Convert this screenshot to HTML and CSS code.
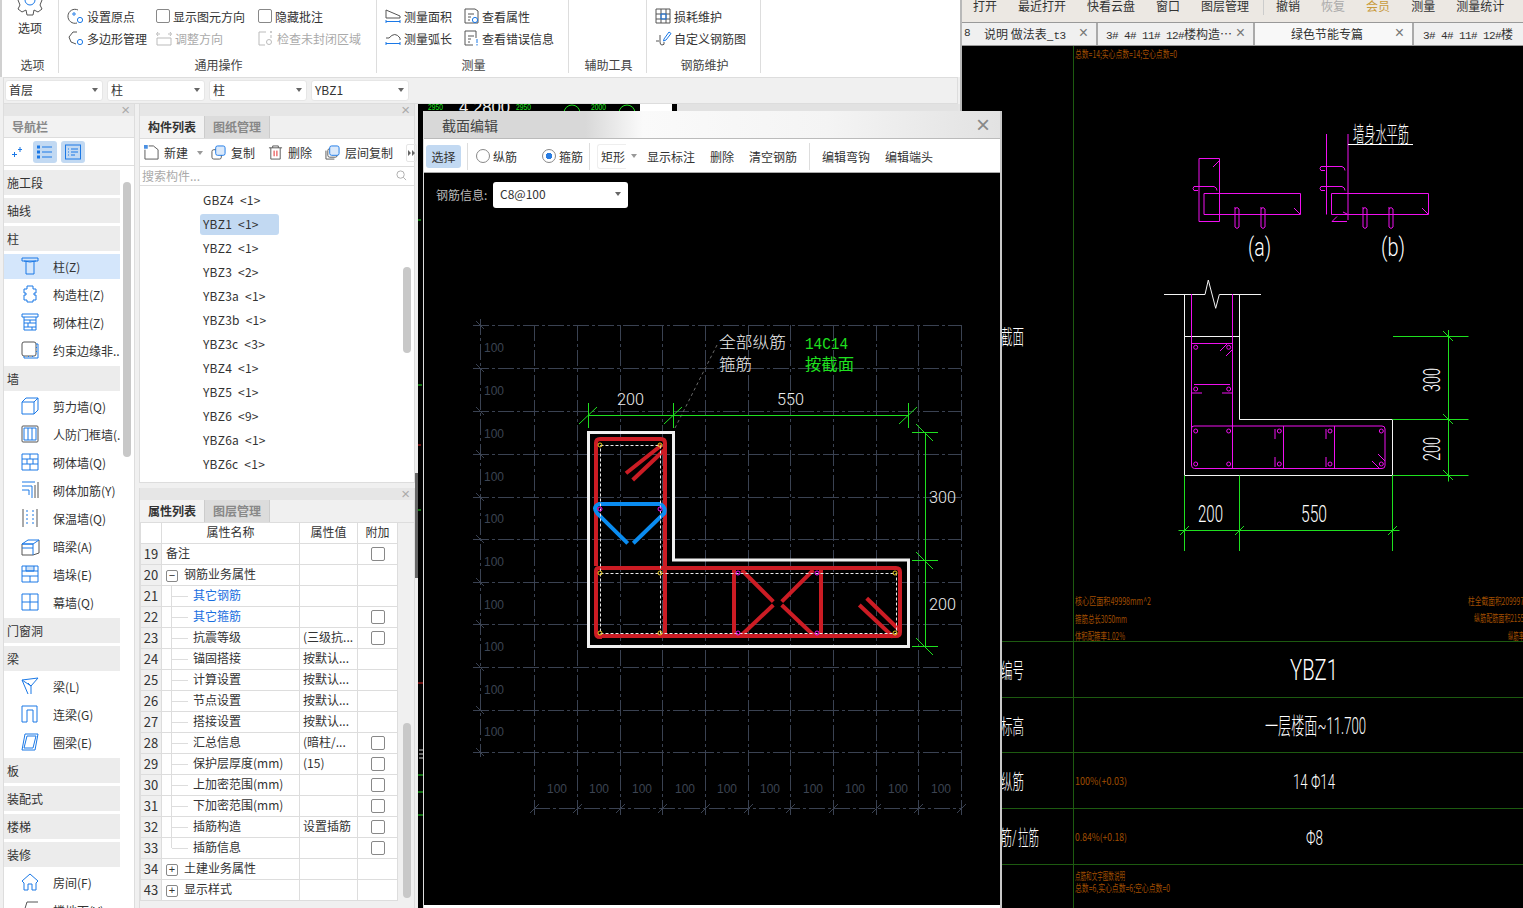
FILE: index.html
```html
<!DOCTYPE html>
<html>
  <head>
    <title>截面编辑</title>
    <meta http-equiv="Content-Type" content="text/html; charset=UTF-8">
    <link rel="stylesheet" href="styles.css">
  </head>

  <body>
    <div class="app">
      <!-- ribbon -->
      <div class="ribbon">
        <div class="group groupOpt">
          <svg class="gear" width="32" height="16" viewBox="0 0 32 16"><path d="M4 0 L6 5 L4 9 L8 12 L12 10 L13 15 H19 L20 10 L24 12 L28 9 L26 5 L28 0" class="gr"/><path d="M11 0 A5 5 0 0 0 21 0" class="bl"/></svg>
          <div class="optName">选项</div>
          <div class="groupName">选项</div>
        </div>
        <div class="group groupGen">
          <div class="rows gridGen">
            <div class="rbItem"><svg class="ic" viewBox="0 0 16 16"><path class="gr" d="M10 2 A7 7 0 1 0 9 15"/><circle class="bl" cx="6" cy="6" r="1.2"/><circle class="bl" cx="12" cy="12" r="2.6"/></svg>设置原点</div>
            <div class="rbItem"><span class="chk"></span>显示图元方向</div>
            <div class="rbItem"><span class="chk"></span>隐藏批注</div>
            <div class="rbItem"><svg class="ic" viewBox="0 0 16 16"><path class="gr" d="M9 2 H5 L1 7 3 12 8 14"/><circle class="bl" cx="12" cy="12" r="2.6"/></svg>多边形管理</div>
            <div class="rbItem off"><svg class="ic" viewBox="0 0 16 16"><path class="lg" d="M1 8 H15 V15 H1 Z M1 4 H4 M2 2 L0.500 4 2 6 M12 4 H15 M14 2 L15.500 4 14 6"/></svg>调整方向</div>
            <div class="rbItem off"><svg class="ic" viewBox="0 0 16 16"><path class="lg" d="M8 2 H1 V15 H7 M13 5 V8"/><circle class="lg" cx="11" cy="12" r="2.500"/><circle cx="13" cy="2" r="1" fill="#bbb"/></svg>检查未封闭区域</div>
          </div>
          <div class="groupName">通用操作</div>
        </div>
        <div class="group groupMeas">
          <div class="rows gridMeas">
            <div class="rbItem"><svg class="ic" viewBox="0 0 16 16"><path class="gr" d="M1 2 L15 8 V10 H1 Z"/><path class="bl" d="M1 12 V15 M15 12 V15 M1 13.500 H15"/></svg>测量面积</div>
            <div class="rbItem"><svg class="ic" viewBox="0 0 16 16"><path class="gr" d="M2 1 H12 L15 3 V15 H2 Z M5 6 H11 M5 9 H8 M5 12 H7"/><circle class="bl" cx="12" cy="12" r="2.600"/></svg>查看属性</div>
            <div class="rbItem"><svg class="ic" viewBox="0 0 16 16"><path class="gr" d="M1 8 H4 Q10 1 15 8 V10"/><path class="bl" d="M1 12 V15 M15 12 V15 M1 13.500 H15"/></svg>测量弧长</div>
            <div class="rbItem"><svg class="ic" viewBox="0 0 16 16"><path class="gr" d="M13 8 V1 H2 V15 H10 M5 6 H11 M5 9 H8 M5 12 H7"/><path class="bl" d="M14 9 V13 M14 14 V15.500"/></svg>查看错误信息</div>
          </div>
          <div class="groupName">测量</div>
        </div>
        <div class="group groupAux">
          <div class="rows"></div>
          <div class="groupName">辅助工具</div>
        </div>
        <div class="group groupRebar">
          <div class="rows gridRebar">
            <div class="rbItem"><svg class="ic" viewBox="0 0 16 16"><path class="gr" d="M1 1 H15 V15 H1 Z M6 1 V15 M11 1 V15 M1 6 H15 M1 11 H15"/><path class="bl" d="M6 6 H11 V11 H6 Z"/></svg>损耗维护</div>
            <div class="rbItem"><svg class="ic" viewBox="0 0 16 16"><path class="gr" d="M5 5 V12 Q5 15 7 15 Q10 15 9 12 M1 11 H4"/><path class="bl" d="M9 9 L14 2 16 3.500 11 10 8.500 11 Z"/></svg>自定义钢筋图</div>
          </div>
          <div class="groupName">钢筋维护</div>
        </div>
      </div>

      <!-- floor / type selectors -->
      <div class="selBar">
        <div class="combo">首层</div>
        <div class="combo">柱</div>
        <div class="combo">柱</div>
        <div class="combo">YBZ1</div>
      </div>

      <div class="work">
        <!-- navigation -->
        <div class="nav">
          <div class="paneHead">×</div>
          <div class="navTitle">导航栏</div>
          <div class="navTools">
            <svg class="navSpark" viewBox="0 0 10 10"><path class="bl" d="M0 7.500 H5 M2.500 5 V10 M6 2.500 H10 M8 0 V5"/></svg>
            <div class="navBtn"><svg class="ic" viewBox="0 0 16 16"><path class="bl" d="M5 3 H15 M5 8 H15 M5 13 H15"/><rect class="bl" x="0.500" y="2" width="2" height="2"/><rect class="bl" x="0.500" y="7" width="2" height="2"/><rect class="bl" x="0.500" y="12" width="2" height="2"/></svg></div>
            <div class="navBtn"><svg class="ic" viewBox="0 0 16 16"><rect class="bl" x="0.500" y="1" width="15" height="14"/><path class="bl" d="M3 5 H4 M6 5 H13 M3 8 H4 M6 8 H13 M3 11 H4 M6 11 H10"/></svg></div>
          </div>
          <div class="navList">
            <div class="navCat">施工段</div>
            <div class="navCat">轴线</div>
            <div class="navCat">柱</div>
            <div class="navItem cur"><svg class="ic" viewBox="0 0 18 18"><path class="bl" d="M1 1 H17 V4 H1 Z M3 4 Q9 6 15 4 M5 5 V17 H13 V5"/></svg>柱(Z)</div>
            <div class="navItem"><svg class="ic" viewBox="0 0 18 18"><path class="bl" d="M6 1 H12 V4 H15 V8 H13 V10 H15 V15 H12 V17 H6 V15 H3 V10 H5 V8 H3 V4 H6 Z"/></svg>构造柱(Z)</div>
            <div class="navItem"><svg class="ic" viewBox="0 0 18 18"><path class="bl" d="M1 1 H17 V4 H1 Z M3 4 V7 H15 V4 M3 7 V17 H15 V7 M3 10 H15 M3 14 H15 M9 7 V10 M7 10 V14 M11 14 V17"/></svg>砌体柱(Z)</div>
            <div class="navItem"><svg class="ic" viewBox="0 0 18 18"><rect class="gr" x="1" y="1" width="14" height="14" rx="2"/><path class="bl" d="M15 3 H17 V17 H3 V15 M16 6 L15 7 M16 10 L15 11 M7 16 L8 15 M11 16 L12 15"/></svg>约束边缘非..</div>
            <div class="navCat">墙</div>
            <div class="navItem"><svg class="ic" viewBox="0 0 18 18"><path class="bl" d="M1 5 H13 V17 H1 Z M1 5 L5 1 H17 V13 L13 17 M13 5 L17 1"/></svg>剪力墙(Q)</div>
            <div class="navItem"><svg class="ic" viewBox="0 0 18 18"><rect class="gr" x="1" y="1" width="16" height="16" rx="1"/><path class="bl" d="M3 3 H15 V15 H3 Z M7 3 V15 M11 3 V15"/></svg>人防门框墙(..</div>
            <div class="navItem"><svg class="ic" viewBox="0 0 18 18"><path class="bl" d="M1 1 H17 V17 H1 Z M1 6 H17 M1 11 H17 M9 1 V6 M6 6 V11 M12 6 V11 M9 11 V17"/></svg>砌体墙(Q)</div>
            <div class="navItem"><svg class="ic" viewBox="0 0 18 18"><path class="gr" d="M17 1 V17 M14 4 V17"/><path class="bl" d="M1 1 H14 M1 5 H11 V17 M1 9 H8 V14"/></svg>砌体加筋(Y)</div>
            <div class="navItem"><svg class="ic" viewBox="0 0 18 18"><path class="gr" d="M2 0 V18 M16 0 V18"/><path class="bl" stroke-dasharray="2 2" d="M6 1 V17 M12 1 V17"/></svg>保温墙(Q)</div>
            <div class="navItem"><svg class="ic" viewBox="0 0 18 18"><path class="gr" d="M1 7 V18 H12 L18 16 V3"/><path class="bl" d="M1 7 L7 3 H18 L12 7 Z M1 7 H12 V18 M1 11 H12"/></svg>暗梁(A)</div>
            <div class="navItem"><svg class="ic" viewBox="0 0 18 18"><path d="M5 1 H13 V6 H5 Z" fill="#c9dff7"/><path class="bl" d="M1 1 H17 V17 H1 Z M5 1 V6 H13 V1 M1 6 H17 M1 11 H17 M9 11 V17"/></svg>墙垛(E)</div>
            <div class="navItem"><svg class="ic" viewBox="0 0 18 18"><path class="bl" d="M1 1 H17 V17 H1 Z M9 1 V17 M1 9 H17"/></svg>幕墙(Q)</div>
            <div class="navCat">门窗洞</div>
            <div class="navCat">梁</div>
            <div class="navItem"><svg class="ic" viewBox="0 0 18 18"><path class="bl" d="M1 3 L17 1 10 9 Z M1 3 L7 17 M10 9 V17 M7 6 L10 9"/></svg>梁(L)</div>
            <div class="navItem"><svg class="ic" viewBox="0 0 18 18"><path class="bl" d="M1 17 V1 H16 V17 H12 V5 H6 V17 Z"/></svg>连梁(G)</div>
            <div class="navItem"><svg class="ic" viewBox="0 0 18 18"><path class="bl" d="M4 1 H17 L14 17 H1 Z M6 3 H15 L12 15 H3 Z"/></svg>圈梁(E)</div>
            <div class="navCat">板</div>
            <div class="navCat">装配式</div>
            <div class="navCat">楼梯</div>
            <div class="navCat">装修</div>
            <div class="navItem"><svg class="ic" viewBox="0 0 18 18"><path class="bl" d="M1 8 L9 1 17 8 15 10 V17 H11 V11 H7 V17 H3 V10 Z"/></svg>房间(F)</div>
            <div class="navItem"><svg class="ic" viewBox="0 0 18 18"><path class="gr" d="M1 17 L6 1 H17"/></svg>楼地面(V)</div>
          </div>
          <div class="thumb navThumb"></div>
        </div>

        <div class="mid">
          <!-- component list -->
          <div class="pane paneList">
            <div class="paneHead">×</div>
            <div class="tabs">
              <div class="tab on">构件列表</div>
              <div class="tab">图纸管理</div>
            </div>
            <div class="listTools">
              <div class="tool toolNew"><svg class="ic" viewBox="0 0 16 16"><rect x="0" y="0" width="4" height="4" fill="#4a90e2"/><path class="gr" d="M1 5 V15 H15 V5 L10 1 H5"/></svg>新建<span class="caret"></span></div>
              <div class="tool"><svg class="ic" viewBox="0 0 16 16"><rect class="gr" x="1" y="5" width="10" height="10" rx="2"/><rect x="5" y="1" width="10" height="10" rx="2" fill="#dbe9fa" stroke="#1a78e6"/></svg>复制</div>
              <div class="tool"><svg class="ic" viewBox="0 0 16 16"><path class="gr" d="M1 3 H15 M5 3 V1 H11 V3 M3 3 V15 H13 V3"/><path d="M6.500 6 V12 M9.500 6 V12" stroke="#e02020" fill="none"/></svg>删除</div>
              <div class="tool"><svg class="ic" viewBox="0 0 16 16"><path class="gr" d="M1 6 V15 H10"/><rect class="gr" x="3" y="4" width="10" height="9" rx="2"/><rect x="5" y="1" width="10" height="10" rx="2" fill="#dbe9fa" stroke="#1a78e6"/></svg>层间复制</div>
              <div class="moreBtn"><svg viewBox="0 0 9 8" width="9" height="8"><path d="M1 1 L4 4 1 7 Z M5 1 L8 4 5 7 Z" fill="#666"/></svg></div>
            </div>
            <div class="search">搜索构件...<svg class="searchIc" viewBox="0 0 12 12"><circle cx="5" cy="5" r="4" fill="none" stroke="#aaa"/><path d="M8 8 L11 11" stroke="#aaa"/></svg></div>
            <div class="compList">
              <div class="comp">GBZ4 &nbsp;&lt;1&gt;</div>
              <div class="comp sel">YBZ1 &nbsp;&lt;1&gt;</div>
              <div class="comp">YBZ2 &nbsp;&lt;1&gt;</div>
              <div class="comp">YBZ3 &nbsp;&lt;2&gt;</div>
              <div class="comp">YBZ3a &nbsp;&lt;1&gt;</div>
              <div class="comp">YBZ3b &nbsp;&lt;1&gt;</div>
              <div class="comp">YBZ3c &nbsp;&lt;3&gt;</div>
              <div class="comp">YBZ4 &nbsp;&lt;1&gt;</div>
              <div class="comp">YBZ5 &nbsp;&lt;1&gt;</div>
              <div class="comp">YBZ6 &nbsp;&lt;9&gt;</div>
              <div class="comp">YBZ6a &nbsp;&lt;1&gt;</div>
              <div class="comp">YBZ6c &nbsp;&lt;1&gt;</div>
            </div>
            <div class="thumb listThumb"></div>
          </div>

          <!-- properties -->
          <div class="pane paneProps">
            <div class="paneHead">×</div>
            <div class="tabs">
              <div class="tab on">属性列表</div>
              <div class="tab">图层管理</div>
            </div>
            <table class="props">
              <tr class="propHead"><td class="num plain"></td><td>属性名称</td><td>属性值</td><td>附加</td></tr>
              <tr><td class="num">19</td><td class="root">备注</td><td></td><td class="add"><span class="chk"></span></td></tr>
              <tr><td class="num">20</td><td class="group1"><span class="fold">−</span>钢筋业务属性</td><td></td><td></td></tr>
              <tr><td class="num">21</td><td class="leaf link">其它钢筋</td><td></td><td></td></tr>
              <tr><td class="num">22</td><td class="leaf link">其它箍筋</td><td></td><td class="add"><span class="chk"></span></td></tr>
              <tr><td class="num">23</td><td class="leaf">抗震等级</td><td class="val">(三级抗...</td><td class="add"><span class="chk"></span></td></tr>
              <tr><td class="num">24</td><td class="leaf">锚固搭接</td><td class="val">按默认...</td><td></td></tr>
              <tr><td class="num">25</td><td class="leaf">计算设置</td><td class="val">按默认...</td><td></td></tr>
              <tr><td class="num">26</td><td class="leaf">节点设置</td><td class="val">按默认...</td><td></td></tr>
              <tr><td class="num">27</td><td class="leaf">搭接设置</td><td class="val">按默认...</td><td></td></tr>
              <tr><td class="num">28</td><td class="leaf">汇总信息</td><td class="val">(暗柱/...</td><td class="add"><span class="chk"></span></td></tr>
              <tr><td class="num">29</td><td class="leaf">保护层厚度(mm)</td><td class="val">(15)</td><td class="add"><span class="chk"></span></td></tr>
              <tr><td class="num">30</td><td class="leaf">上加密范围(mm)</td><td></td><td class="add"><span class="chk"></span></td></tr>
              <tr><td class="num">31</td><td class="leaf">下加密范围(mm)</td><td></td><td class="add"><span class="chk"></span></td></tr>
              <tr><td class="num">32</td><td class="leaf">插筋构造</td><td class="val">设置插筋</td><td class="add"><span class="chk"></span></td></tr>
              <tr><td class="num">33</td><td class="leaf last">插筋信息</td><td></td><td class="add"><span class="chk"></span></td></tr>
              <tr><td class="num">34</td><td class="group1"><span class="fold">+</span>土建业务属性</td><td></td><td></td></tr>
              <tr><td class="num">43</td><td class="group1"><span class="fold">+</span>显示样式</td><td></td><td></td></tr>
            </table>
            <div class="thumb propThumb"></div>
          </div>
        </div>

        <div class="split">
          <div class="splitTop"></div>
          <div class="splitDark"></div>
        </div>

        <!-- main view, mostly hidden by the dialog -->
        <div class="view">
          <svg class="viewSvg" viewBox="418 104 542 804">
            <text x="428" y="110" class="vGreen" textLength="15" lengthAdjust="spacingAndGlyphs">2950</text>
            <text x="459" y="113" class="vWhite" textLength="51" lengthAdjust="spacingAndGlyphs">4 2800</text>
            <text x="516" y="110" class="vGreen" textLength="15" lengthAdjust="spacingAndGlyphs">2950</text>
            <text x="591" y="110" class="vGreen" textLength="15" lengthAdjust="spacingAndGlyphs">2000</text>
            <circle cx="572" cy="113" r="8" fill="none" stroke="#1fe01f"/>
            <circle cx="627" cy="113" r="8" fill="none" stroke="#1fe01f"/>
            <rect x="640" y="104" width="32" height="8" fill="#fff"/>
            <rect x="677" y="104" width="281" height="8" fill="#e2e2e2"/>
            <path d="M418 220 h3 M418 385 h4 M418 510 h3 M418 775 h5 M418 792 h5 M418 815 h5" stroke="#1fe01f"/>
            <path d="M418 445 h3 M418 683 h5" stroke="#e02020"/>
            <path d="M419 750 h4 M419 754 h4 M419 758 h4" stroke="#ccc"/>
          </svg>
          <div class="viewEdge"></div>
        </div>
      </div>
    </div>

    <!-- second program window -->
    <div class="cadWin">
      <div class="menu">
        <span class="m1">打开</span>
        <span>最近打开</span>
        <span>快看云盘</span>
        <span>窗口</span>
        <span>图层管理</span>
        <i class="menuSep"></i>
        <span>撤销</span>
        <span class="dim">恢复</span>
        <span class="gold">会员</span>
        <span>测量</span>
        <span>测量统计</span>
      </div>
      <div class="docTabs">
        <div class="docTab t1"><span class="asc">8</span><span class="tabText">说明 做法表_<span class="asc">t3</span></span><b class="tabX">×</b></div>
        <div class="docTab t2"><span class="tabText"><span class="asc">3# 4# 11# 12#</span>楼构造…</span><b class="tabX">×</b></div>
        <div class="docTab t3 act"><span class="tabText">绿色节能专篇</span><b class="tabX">×</b></div>
        <div class="docTab t4"><span class="tabText"><span class="asc">3# 4# 11# 12#</span>楼</span></div>
      </div>
      <svg class="sheet" viewBox="962 46 561 862">
        <g class="cGrid" shape-rendering="crispEdges">
          <path d="M1073.500 46 V908 M962 641.500 H1523 M962 697.500 H1523 M962 752.500 H1523 M962 808.500 H1523 M962 864.500 H1523"/>
        </g>
        <text x="1075" y="58" class="cBrown" textLength="102" lengthAdjust="spacingAndGlyphs">总数=14;实心点数=14;空心点数=0</text>
        <text x="1075" y="605" class="cBrown" textLength="76" lengthAdjust="spacingAndGlyphs">核心区面积49998mm^2</text>
        <text x="1075" y="623" class="cBrown" textLength="52" lengthAdjust="spacingAndGlyphs">箍筋总长3050mm</text>
        <text x="1075" y="640" class="cBrown" textLength="50" lengthAdjust="spacingAndGlyphs">体积配箍率1.02%</text>
        <text x="1468" y="605" class="cBrown" textLength="56" lengthAdjust="spacingAndGlyphs">柱全截面积209997</text>
        <text x="1474" y="622" class="cBrown" textLength="50" lengthAdjust="spacingAndGlyphs">纵筋配筋面积2155</text>
        <text x="1508" y="640" class="cBrown" textLength="16" lengthAdjust="spacingAndGlyphs">纵筋率</text>
        <text x="1075" y="785" class="cBrown" textLength="52" lengthAdjust="spacingAndGlyphs">100%(+0.03)</text>
        <text x="1075" y="841" class="cBrown" textLength="52" lengthAdjust="spacingAndGlyphs">0.84%(+0.18)</text>
        <text x="1075" y="880" class="cBrown" textLength="50" lengthAdjust="spacingAndGlyphs">点筋和文字图数说明</text>
        <text x="1075" y="892" class="cBrown" textLength="95" lengthAdjust="spacingAndGlyphs">总数=6,实心点数=6;空心点数=0</text>

        <text x="1001" y="344" class="cWhite" font-size="21" textLength="23" lengthAdjust="spacingAndGlyphs">截面</text>
        <text x="1001" y="678" class="cWhite" font-size="21" textLength="23" lengthAdjust="spacingAndGlyphs">编号</text>
        <text x="1001" y="734" class="cWhite" font-size="21" textLength="23" lengthAdjust="spacingAndGlyphs">标高</text>
        <text x="1001" y="789" class="cWhite" font-size="21" textLength="23" lengthAdjust="spacingAndGlyphs">纵筋</text>
        <text transform="translate(989 845) scale(.55 1)" class="cWhite" font-size="21">箍筋/</text>
        <text transform="translate(1018 845) scale(.5 1)" class="cWhite" font-size="21">拉筋</text>
        <text x="1290" y="680" class="cWhite" font-size="30" textLength="48" lengthAdjust="spacingAndGlyphs">YBZ1</text>
        <text x="1265" y="734" class="cWhite" font-size="23" textLength="101" lengthAdjust="spacingAndGlyphs">一层楼面~11.700</text>
        <text x="1293" y="789" class="cWhite" font-size="21" textLength="42" lengthAdjust="spacingAndGlyphs">14 Φ14</text>
        <text x="1306" y="845" class="cWhite" font-size="21" textLength="17" lengthAdjust="spacingAndGlyphs">Φ8</text>

        <!-- figures a, b -->
        <g class="cMag">
          <path d="M1199 158.500 H1219.500 V221.500 H1199 Z M1204 193.500 H1300.500 V214.500 H1204 Z M1219 161 l-6 6 M1300 214 l-6 -6"/>
          <path d="M1194 186.500 H1214 q3 1 3 4 M1194 186.500 q-2 2 0 4 h4"/>
          <path d="M1235 207 v20 q2 3 4 0 v-18 q-2 -3 -4 0 M1261 207 v20 q2 3 4 0 v-18 q-2 -3 -4 0"/>
          <path d="M1326.500 134 V214.500 M1348 134 V220 M1331.500 193.500 H1428.500 V214.500 H1331.500 Z M1428 214 l-6 -6 M1347 214 l-4 -2 M1332 221.500 H1347 M1332 221.500 l5 -5"/>
          <path d="M1321 166.500 H1342 q3 1 3 4 M1321 166.500 q-2 2 0 4 h4 M1321 186.500 H1342 q3 1 3 4 M1321 186.500 q-2 2 0 4 h4"/>
          <path d="M1363 207 v20 q2 3 4 0 v-18 q-2 -3 -4 0 M1389 207 v20 q2 3 4 0 v-18 q-2 -3 -4 0"/>
        </g>
        <text x="1353" y="142" class="cWhite" font-size="22" textLength="56" lengthAdjust="spacingAndGlyphs">墙身水平筋</text>
        <path d="M1348 144.500 H1413" stroke="#fff" fill="none"/>
        <text x="1248" y="256" class="cWhite" font-size="26" textLength="23" lengthAdjust="spacingAndGlyphs">(a)</text>
        <text x="1381" y="256" class="cWhite" font-size="26" textLength="24" lengthAdjust="spacingAndGlyphs">(b)</text>

        <!-- detail -->
        <path class="cLine" d="M1164 294.500 H1205 L1208.300 280 1215.700 308.300 1219.300 294.500 H1261 M1184.500 294.500 V475.500 H1392.500 V419.500 H1239.500 V294.500 M1184.500 336.500 H1239.500"/>
        <g class="cMag">
          <path d="M1191.500 294 V465 q0 3.500 3 3.500 H1382 q3 0 3 -3 V429 q0 -3 -3 -3 H1194 q-3 0 -2.500 3 M1232.500 294 V468 M1191.500 343.500 H1232.500 M1194 384.500 H1230 M1283.500 426 V468 M1334.500 426 V468 M1192 393 h10 M1222 393 h10 M1220 351 l7 -7 M1226 356 l6 -6 M1378 454 l7 7 M1372 461 l7 7"/>
          <circle cx="1195.700" cy="347.300" r="2"/><circle cx="1228.700" cy="347.300" r="2"/>
          <circle cx="1195.700" cy="389" r="2"/><circle cx="1228.700" cy="389" r="2"/>
          <circle cx="1195.700" cy="431" r="2"/><circle cx="1228.700" cy="431" r="2"/><circle cx="1279.300" cy="431" r="2"/><circle cx="1330" cy="431" r="2"/><circle cx="1381.300" cy="431" r="2"/>
          <circle cx="1195.700" cy="464" r="2"/><circle cx="1228.700" cy="464" r="2"/><circle cx="1279.300" cy="464" r="2"/><circle cx="1330" cy="464" r="2"/><circle cx="1381.300" cy="464" r="2"/>
          <path d="M1275 429 v10 M1275 457 v10 M1326 429 v10 M1326 457 v10"/>
        </g>
        <path class="cGreen" d="M1448.500 330 V481.500 M1393 336.500 H1468.500 M1392.500 419.500 H1468.500 M1392.500 475.500 H1468.500 M1178.500 530.500 H1399.500 M1184.500 475.500 V551 M1239.500 475.500 V551 M1392.500 475.500 V551"/>
        <path class="cGreen" d="M1443 331 l10 10 M1443 414 l10 10 M1443 470 l10 10 M1180 535 l9 -9 M1235 535 l9 -9 M1388 535 l9 -9"/>
        <text x="1198" y="522" class="cWhite" font-size="23" textLength="25" lengthAdjust="spacingAndGlyphs">200</text>
        <text x="1301" y="522" class="cWhite" font-size="23" textLength="26" lengthAdjust="spacingAndGlyphs">550</text>
        <text transform="translate(1440 392) rotate(-90)" class="cWhite" font-size="23" textLength="24" lengthAdjust="spacingAndGlyphs">300</text>
        <text transform="translate(1440 461) rotate(-90)" class="cWhite" font-size="23" textLength="24" lengthAdjust="spacingAndGlyphs">200</text>
      </svg>
    </div>

    <!-- floating dialog -->
    <div class="dialog">
      <div class="dlgTitle"><span>截面编辑</span><b class="dlgClose">×</b></div>
      <div class="dlgTools">
        <div class="pick">选择</div>
        <i class="sep s1"></i>
        <span class="radio r1"></span><span class="rLab">纵筋</span>
        <span class="radio r2 on"></span><span class="rLab">箍筋</span>
        <i class="sep s2"></i>
        <div class="shape">矩形</div><span class="caret c2"></span>
        <span class="dt d1">显示标注</span>
        <span class="dt">删除</span>
        <span class="dt">清空钢筋</span>
        <i class="sep s3"></i>
        <span class="dt d2">编辑弯钩</span>
        <span class="dt">编辑端头</span>
      </div>
      <div class="dlgBody">
        <div class="rebarRow">
          <span class="rebarLab">钢筋信息:</span>
          <div class="rebarCombo">C8@100</div>
        </div>
        <svg class="section" viewBox="424 173 576 732">
          <!-- grid -->
          <g class="gLine" shape-rendering="crispEdges">
            <path d="M473 325.500 H961 M473 368.500 H961 M473 411.500 H961 M473 454.500 H961 M473 497.500 H961 M473 539.500 H961 M473 582.500 H961 M473 624.500 H961 M473 667.500 H961 M473 710.500 H961 M473 752.500 H961"/>
            <path d="M480.500 319 V757 M534.500 325 V815 M577.500 325 V815 M620.500 325 V815 M662.500 325 V815 M705.500 325 V815 M748.500 325 V815 M790.500 325 V815 M833.500 325 V815 M876.500 325 V815 M918.500 325 V815 M961.500 325 V815"/>
            <path d="M534 808.500 H961"/>
          </g>
          <g class="gTick">
            <path d="M476 321 l8 8 M476 364 l8 8 M476 407 l8 8 M476 450 l8 8 M476 493 l8 8 M476 535 l8 8 M476 578 l8 8 M476 620 l8 8 M476 663 l8 8 M476 706 l8 8 M476 748 l8 8"/>
            <path d="M530 813 l9 -9 M573 813 l9 -9 M616 813 l9 -9 M658 813 l9 -9 M701 813 l9 -9 M744 813 l9 -9 M786 813 l9 -9 M829 813 l9 -9 M872 813 l9 -9 M914 813 l9 -9 M957 813 l9 -9"/>
          </g>
          <g class="gText">
            <text x="484" y="352" textLength="20" lengthAdjust="spacingAndGlyphs">100</text><text x="484" y="395" textLength="20" lengthAdjust="spacingAndGlyphs">100</text><text x="484" y="438" textLength="20" lengthAdjust="spacingAndGlyphs">100</text>
            <text x="484" y="481" textLength="20" lengthAdjust="spacingAndGlyphs">100</text><text x="484" y="523" textLength="20" lengthAdjust="spacingAndGlyphs">100</text><text x="484" y="566" textLength="20" lengthAdjust="spacingAndGlyphs">100</text>
            <text x="484" y="609" textLength="20" lengthAdjust="spacingAndGlyphs">100</text><text x="484" y="651" textLength="20" lengthAdjust="spacingAndGlyphs">100</text><text x="484" y="694" textLength="20" lengthAdjust="spacingAndGlyphs">100</text><text x="484" y="736" textLength="20" lengthAdjust="spacingAndGlyphs">100</text>
            <text x="547" y="793" textLength="20" lengthAdjust="spacingAndGlyphs">100</text><text x="589" y="793" textLength="20" lengthAdjust="spacingAndGlyphs">100</text><text x="632" y="793" textLength="20" lengthAdjust="spacingAndGlyphs">100</text><text x="675" y="793" textLength="20" lengthAdjust="spacingAndGlyphs">100</text><text x="717" y="793" textLength="20" lengthAdjust="spacingAndGlyphs">100</text>
            <text x="760" y="793" textLength="20" lengthAdjust="spacingAndGlyphs">100</text><text x="803" y="793" textLength="20" lengthAdjust="spacingAndGlyphs">100</text><text x="845" y="793" textLength="20" lengthAdjust="spacingAndGlyphs">100</text><text x="888" y="793" textLength="20" lengthAdjust="spacingAndGlyphs">100</text><text x="931" y="793" textLength="20" lengthAdjust="spacingAndGlyphs">100</text>
          </g>

          <!-- leader -->
          <path d="M675 428 L717 345" class="leader"/>

          <!-- dimensions -->
          <g class="dim">
            <path d="M588.500 403 V428 M673.500 403 V428 M908.500 403 V428 M588.500 415.500 H908.500 M925.500 432.500 V646.500 M912 432.500 H938 M912 560.500 H938 M912 646.500 H938"/>
            <path d="M579 424 l18 -17 M664 424 l18 -17 M899 424 l18 -17 M916 424 l17 17 M916 552 l17 17 M916 638 l17 17"/>
          </g>

          <!-- concrete outline -->
          <path class="outline" d="M588.500 432.500 H673.500 V560 H908.500 V646.500 H588.500 Z"/>

          <!-- stirrups -->
          <g class="redBar">
            <path d="M596 566 V443 q0 -4 4 -4 H661 q4 0 4 4 V637 M600 637 q-4 0 -4 -4 V571 q0 -3 3 -3 H896 q4 0 4 4 V632 q0 4 -4 4 H600 Z"/>
            <path d="M734 568 V636 M821 568 V636 M661.700 445 L626 473.300 M664.300 450 L632.700 480 M859.300 605 L893.300 637 M866.700 598.300 L899.300 630"/>
            <path d="M741.700 570 L773.300 601.700 M773.300 605 L741.700 635 M813.300 570 L781.700 601.700 M781.700 605 L813.300 635"/>
          </g>
          <path class="blueBar" d="M627.700 543.300 L597.300 513.300 Q592 507 599 504 H660 Q666 507 664.300 513.300 L633.300 543.300"/>

          <!-- main bars and stirrup centre lines -->
          <path class="centre" d="M600.500 445.500 H660.500 V633.500 H600.500 Z M600.500 573.500 H896.500 V633.500 H660.500"/>
          <g class="dotY">
            <circle cx="600" cy="445" r="2"/><circle cx="660" cy="445" r="2"/><circle cx="600" cy="573" r="2"/><circle cx="660" cy="573" r="2"/><circle cx="895" cy="573" r="2"/><circle cx="600" cy="633" r="2"/><circle cx="660" cy="633" r="2"/><circle cx="895" cy="633" r="2"/>
          </g>
          <g class="dotM">
            <circle cx="600" cy="509" r="2"/><circle cx="660" cy="509" r="2"/><circle cx="738" cy="573" r="2"/><circle cx="817" cy="573" r="2"/><circle cx="738" cy="633" r="2"/><circle cx="817" cy="633" r="2"/>
          </g>

          <g class="label">
            <text x="617" y="405" textLength="27" lengthAdjust="spacingAndGlyphs">200</text>
            <text x="777" y="405" textLength="27" lengthAdjust="spacingAndGlyphs">550</text>
            <text x="929" y="503" textLength="27" lengthAdjust="spacingAndGlyphs">300</text>
            <text x="929" y="610" textLength="27" lengthAdjust="spacingAndGlyphs">200</text>
            <text x="719" y="348" textLength="67" lengthAdjust="spacingAndGlyphs">全部纵筋</text>
            <text x="719" y="370" textLength="33" lengthAdjust="spacingAndGlyphs">箍筋</text>
          </g>
          <text x="805" y="349" class="gnLabel mono" textLength="43" lengthAdjust="spacingAndGlyphs">14C14</text>
          <text x="805" y="370" class="gnLabel" textLength="49" lengthAdjust="spacingAndGlyphs">按截面</text>
        </svg>
      </div>
    </div>
  </body>
</html>
```
FILE: styles.css
```css
* { box-sizing: border-box; }
html, body { height: 100%; }
body {
  margin: 0;
  width: 1523px;
  height: 908px;
  overflow: hidden;
  display: flex;
  background: #f0f0f0;
  color: #333;
  font: 12px "Noto Sans CJK SC", "Liberation Sans", sans-serif;
  position: relative;
}
i { font-style: normal; }
.ic { width: 16px; height: 16px; flex: none; overflow: visible; }
.gr { fill: none; stroke: #555; }
.bl { fill: none; stroke: #1a78e6; }
.lg { fill: none; stroke: #bbb; }
.chk {
  display: inline-block;
  width: 14px;
  height: 14px;
  flex: none;
  border: 1px solid #888;
  border-radius: 2px;
  background: white;
}
.caret {
  width: 0;
  height: 0;
  border: 3px solid transparent;
  border-top: 4px solid #999;
  border-bottom: 0;
}

.app { width: 960px; flex: none; display: flex; flex-direction: column; }

/* ribbon */
.ribbon {
  height: 77px;
  display: flex;
  background: white;
  border-left: 2px solid #d0d0d0;
}
.group {
  height: 73px;
  display: flex;
  flex-direction: column;
  border-right: 1px solid #ddd;
}
.rows { height: 50px; padding-top: 5px; display: grid; grid-auto-rows: 22px; }
.groupName { height: 17px; margin-top: auto; padding-left: 2px; line-height: 17px; text-align: center; color: #444; }
.groupOpt { width: 57px; align-items: center; }
.gear { display: block; }
.optName { margin-top: 3px; height: 17px; line-height: 17px; }
.groupOpt .groupName { margin-top: auto; padding-left: 5px; }
.groupGen { width: 318px; }
.gridGen { padding-left: 9px; grid-template-columns: 88px 102px 1fr; }
.groupMeas { width: 192px; }
.gridMeas { padding-left: 8px; grid-template-columns: 78px 1fr; }
.groupAux { width: 78px; }
.groupRebar { width: 114px; }
.gridRebar { padding-left: 8px; }
.rbItem { display: flex; align-items: center; gap: 3px; white-space: nowrap; }
.off { color: #aaa; }

/* selectors */
.selBar {
  height: 27px;
  margin-left: 3px;
  width: 955px;
  padding: 2px 1px;
  display: flex;
  gap: 4px;
  border: 1px solid #ddd;
  background: #f0f0f0;
}
.combo {
  width: 98px;
  height: 21px;
  padding: 0 4px 2px 3px;
  line-height: 18px;
  background: white;
  border: 1px solid #e6e6e6;
  border-radius: 3px;
  display: flex;
  justify-content: space-between;
  align-items: center;
}
.combo:after {
  content: "";
  border: 3px solid transparent;
  border-top: 4px solid #666;
  border-bottom: 0;
}

.work { flex: 1; display: flex; min-height: 0; }

.paneHead {
  height: 12px;
  padding-right: 4px;
  background: #e6e6e6;
  color: #aaa;
  font: 15px/11px "Liberation Sans", sans-serif;
  text-align: right;
}

/* navigation */
.nav {
  width: 132px;
  margin-left: 3px;
  position: relative;
  background: white;
  overflow: hidden;
  border-right: 1px solid #ddd;
  border-left: 1px solid #ddd;
}
.navTitle {
  height: 22px;
  padding-left: 8px;
  line-height: 21px;
  background: #f2f2f2;
  color: #888;
  font-weight: 700;
  border-bottom: 1px solid #ddd;
}
.navTools {
  height: 28px;
  padding-left: 8px;
  display: flex;
  align-items: center;
  border-bottom: 1px solid #ddd;
}
.navSpark { width: 10px; height: 10px; margin-right: 11px; }
.navBtn {
  width: 24px;
  height: 22px;
  margin-right: 4px;
  border-radius: 3px;
  background: #c2d9f2;
  display: flex;
  align-items: center;
  justify-content: center;
}
.navList { padding-top: 4px; display: grid; grid-auto-rows: 25px; row-gap: 3px; width: 116px; }
.navCat { padding-left: 3px; line-height: 25px; background: #ececec; }
.navItem {
  padding: 0 0 1px 17px;
  display: flex;
  align-items: center;
  gap: 14px;
  white-space: nowrap;
  overflow: hidden;
}
.navItem .ic { width: 18px; height: 18px; }
.cur { background: #d4e6fb; }
.thumb { position: absolute; width: 8px; border-radius: 4px; background: #c8c8c8; }
.navThumb { left: 119px; top: 78px; height: 275px; }

/* middle column */
.mid { width: 276px; margin-left: 4px; display: flex; flex-direction: column; gap: 5px; }
.pane { position: relative; background: white; border: 1px solid #ddd; border-top: 0; }
.paneList { height: 379px; }
.paneProps { flex: 1; background: #f0f0f0; overflow: hidden; border-bottom: 0; }
.tabs { height: 23px; display: flex; background: #f0f0f0; border-bottom: 1px solid #ddd; }
.tab {
  width: 65px;
  text-align: center;
  line-height: 22px;
  font-weight: 700;
  color: #888;
  background: #dcdcdc;
  border-right: 1px solid #ccc;
}
.tab.on { color: #333; background: #f2f2f2; }
.listTools {
  height: 28px;
  padding-left: 4px;
  display: flex;
  align-items: center;
  border-bottom: 1px solid #ddd;
}
.tool { display: flex; align-items: center; gap: 5px; margin-right: 13px; white-space: nowrap; }
.tool .ic { width: 15px; height: 15px; }
.toolNew { margin-right: 8px; }
.toolNew .caret { margin-left: 4px; }
.moreBtn {
  width: 11px;
  height: 18px;
  margin: 0 1px 0 auto;
  border: 1px solid #e6e6e6;
  border-radius: 2px;
  flex: none;
  display: flex;
  align-items: center;
  justify-content: center;
}
.search {
  height: 19px;
  padding: 0 7px 1px 2px;
  line-height: 17px;
  color: #aaa;
  display: flex;
  justify-content: space-between;
  align-items: center;
  border-bottom: 1px solid #ddd;
}
.searchIc { width: 11px; height: 11px; }
.compList { padding: 2px 0 0 60px; }
.comp { height: 24px; line-height: 24px; padding-left: 3px; white-space: nowrap; width: 80px; font-size: 12px; letter-spacing: .25px; }
.sel { height: 21px; line-height: 20px; margin: 2px 0 1px; border-radius: 3px; background: #c2d9f2; width: 79px; }
.listThumb { left: 263px; top: 163px; height: 86px; }
.propThumb { left: 263px; top: 235px; height: 175px; }

/* properties table */
.props { border-collapse: collapse; table-layout: fixed; width: 258px; background: white; }
.props td { height: 21px; padding: 0 3px 2px; border: 1px solid #ddd; white-space: nowrap; line-height: 18px; overflow: hidden; }
.props td:nth-child(1) { width: 21px; }
.props td:nth-child(2) { width: 138px; }
.props td:nth-child(3) { width: 58px; }
.propHead td { height: 20px; text-align: center; border-top: 0; }
.num { background: #f0f0f0; text-align: center; font-size: 13px; padding: 0 !important; }
.propHead .plain { background: white; }
.root { padding-left: 4px !important; }
.group1 { padding-left: 4px !important; }
.fold {
  display: inline-block;
  width: 12px;
  height: 12px;
  margin-right: 6px;
  border: 1px solid #888;
  border-radius: 2px;
  font: 11px/9px "Liberation Sans", sans-serif;
  text-align: center;
  vertical-align: 0;
}
.leaf {
  padding-left: 31px !important;
  background:
    linear-gradient(#ddd, #ddd) 9px 0 / 1px 100% no-repeat,
    linear-gradient(#ddd, #ddd) 10px 50% / 16px 1px no-repeat;
}
.leaf.last {
  background:
    linear-gradient(#ddd, #ddd) 9px 0 / 1px 50% no-repeat,
    linear-gradient(#ddd, #ddd) 10px 50% / 16px 1px no-repeat;
}
.link { color: #1a6fe0; }
.props .add { padding: 0; vertical-align: middle; }
.add .chk { display: block; margin: 0 auto; }

.split { width: 3px; display: flex; flex-direction: column; background: #eee; }
.splitTop { height: 369px; }
.splitDark { height: 105px; background: #666; }

.view { flex: 1; position: relative; background: black; }
.viewSvg { display: block; width: 542px; height: 804px; }
.viewEdge { position: absolute; left: 540px; top: 0; width: 2px; height: 804px; background: #e4e4e4; }
.vGreen { fill: #1fe01f; font: 9px "Liberation Sans", sans-serif; }
.vWhite { fill: #eee; font: 16px "Liberation Sans", sans-serif; }

/* second window */
.cadWin { flex: 1; display: flex; flex-direction: column; border-left: 2px solid #b8b8b8; min-width: 0; }
.menu {
  height: 22px;
  padding-left: 11px;
  display: flex;
  gap: 21px;
  line-height: 12px;
  background: #ece8e3;
  white-space: nowrap;
}
.menu span { flex: none; }
.menuSep { width: 1px; height: 15px; margin: 0 -9px 0 -7px; background: #ccc; }
.dim { color: #aaa; }
.gold { color: #c89a3c; }
.docTabs {
  height: 24px;
  display: flex;
  background: #f0f0f0;
  border-top: 1px solid #999;
  border-bottom: 1px solid #999;
  overflow: hidden;
  white-space: nowrap;
}
.docTab { flex: none; height: 22px; padding-bottom: 2px; display: flex; align-items: center; border-right: 2px solid #aaa; }
.asc { font: 11px "Liberation Mono", monospace; letter-spacing: -.6px; }
.tabText { flex: 1; }
.t1 { width: 136px; padding-left: 2px; padding-right: 8px; }
.t1 .tabText { padding-left: 14px; }
.t2 { width: 157px; padding-left: 8px; padding-right: 8px; }
.t3 { width: 159px; padding-left: 36px; padding-right: 8px; background: #f8f8f8; }
.t4 { width: 120px; padding-left: 9px; border-right: 0; }
.tabX { color: #777; font: 400 16px/16px "Liberation Sans", sans-serif; margin-left: 3px; }
.sheet { flex: 1; min-height: 0; display: block; background: black; width: 561px; }
.cGrid path { stroke: #1d5a10; fill: none; }
.cBrown { fill: #a04e00; font: 10px "Noto Sans CJK SC", sans-serif; }
.cWhite { fill: #fff; font-family: Roboto, "Noto Sans CJK SC", sans-serif; font-weight: 300; }
.cMag { fill: none; stroke: #f010f0; }
.cLine { fill: none; stroke: #f4f4f4; }
.cGreen { fill: none; stroke: #1fe01f; }

/* dialog */
.dialog {
  position: absolute;
  left: 423px;
  top: 111px;
  width: 579px;
  height: 797px;
  display: flex;
  flex-direction: column;
  background: #d0d0d0;
  border-right: 2px solid #c8c8c8;
  border-left: 1px solid #ddd;
}
.dlgTitle {
  height: 28px;
  flex: none;
  padding: 0 10px 0 18px;
  display: flex;
  justify-content: space-between;
  align-items: center;
  font-size: 14px;
  color: #444;
  background: linear-gradient(90deg, #d8d8d8 0, #d8d8d8 28%, #fafafa 38%, #f4f4f4 70%, #e2e2e2 100%);
  border-bottom: 1px solid #bbb;
}
.dlgClose { font: 400 24px/24px "Liberation Sans", sans-serif; color: #888; }
.dlgTools {
  height: 34px;
  flex: none;
  padding: 1px 0 0 2px;
  display: flex;
  align-items: center;
  background: white;
  border-bottom: 1px solid #aaa;
  white-space: nowrap;
}
.pick { width: 35px; height: 23px; line-height: 23px; text-align: center; border-radius: 3px; background: #c2d9f2; }
.sep { width: 1px; height: 27px; background: #ddd; flex: none; }
.s1 { margin-left: 6px; }
.s2 { margin-left: 6px; }
.s3 { margin: 0 0 0 12px; }
.radio { width: 14px; height: 14px; flex: none; border: 1px solid #888; border-radius: 50%; }
.r1 { margin-left: 8px; }
.r2 { margin-left: 25px; }
.radio.on { background: radial-gradient(circle, #2a7de1 0 3px, white 3.5px); }
.rLab { margin-left: 3px; }
.shape { width: 29px; margin-left: 7px; padding-left: 3px; height: 25px; line-height: 23px; border: 1px solid #eee; border-right: 0; border-radius: 3px 0 0 3px; }
.c2 { margin-left: 5px; }
.dt { margin-left: 15px; }
.d1 { margin-left: 10px; }
.d2 { margin-left: 12px; }
.dlgBody { flex: 1; position: relative; min-height: 0; background: black; border-bottom: 3px solid white; }
.rebarRow {
  position: absolute;
  left: 12px;
  top: 9px;
  display: flex;
  align-items: center;
  gap: 3px;
}
.rebarLab { color: #bbb; width: 54px; padding-bottom: 2px; }
.rebarCombo {
  width: 135px;
  height: 26px;
  padding: 0 7px 2px;
  line-height: 22px;
  background: white;
  border-radius: 3px;
  display: flex;
  justify-content: space-between;
  align-items: center;
}
.rebarCombo:after {
  content: "";
  border: 3px solid transparent;
  border-top: 4px solid #666;
  border-bottom: 0;
}
.section { display: block; width: 576px; height: 732px; }
.gLine path { stroke: #3a4252; fill: none; stroke-dasharray: 16 3 3 3; }
.gTick path { stroke: #3a4252; fill: none; }
.gText text { fill: #3c4452; font: 13px "Liberation Sans", sans-serif; }
.leader { stroke: #6a6a6a; fill: none; stroke-dasharray: 3 3; }
.dim path { stroke: #1fe01f; fill: none; }
.outline { fill: none; stroke: #f0f0f0; stroke-width: 3; }
.redBar path { fill: none; stroke: #cc1c24; stroke-width: 4; }
.blueBar { fill: none; stroke: #0a8cf0; stroke-width: 4; }
.centre { fill: none; stroke: #eaeaea; stroke-dasharray: 3 2; }
.dotY circle { fill: none; stroke: #e8c820; }
.dotM circle { fill: none; stroke: #f010f0; }
.label text { fill: #eee; font: 300 16px Roboto, "Noto Sans CJK SC", sans-serif; }
.gnLabel { fill: #1fe01f; font: 16px "Noto Sans CJK SC", sans-serif; }
.mono { font-family: "Liberation Mono", monospace; }
```
